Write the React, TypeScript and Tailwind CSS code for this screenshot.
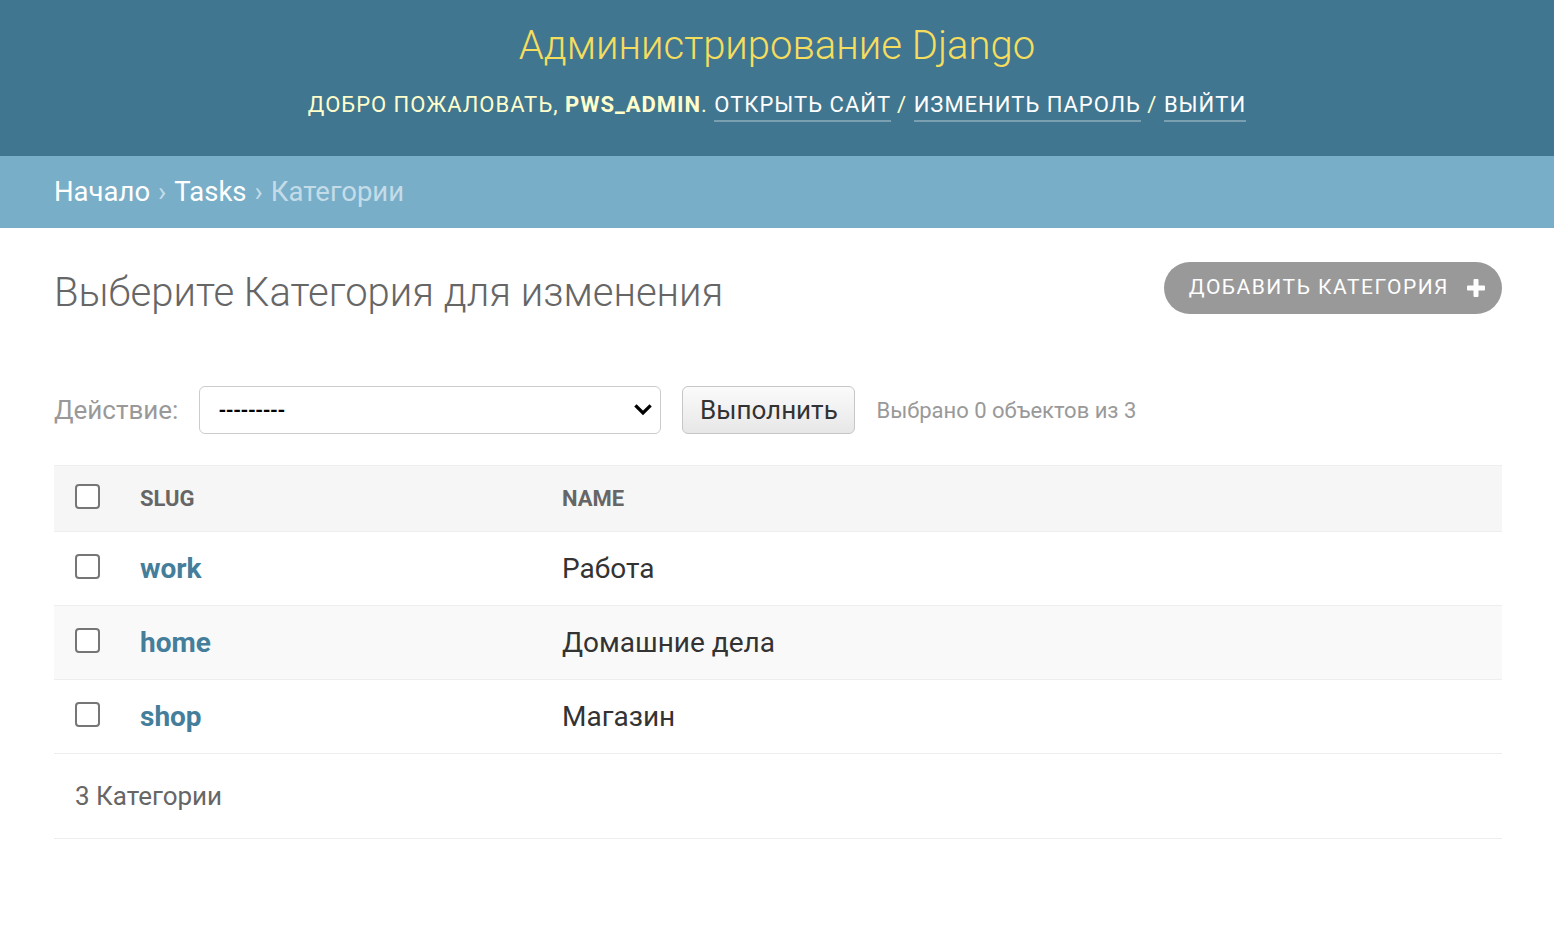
import React from "react";

const rows = [
  { slug: "work", name: "Работа", bg: "bg-white" },
  { slug: "home", name: "Домашние дела", bg: "bg-[#f9f9f9]" },
  { slug: "shop", name: "Магазин", bg: "bg-white" },
];

function Box() {
  return <span className="block w-[25px] h-[25px] rounded-[4px] border-2 border-[#767676] bg-white" />;
}

export default function App() {
  return (
    <div className="min-h-[952px] bg-white" style={{ fontFamily: "Roboto, 'Liberation Sans', sans-serif" }}>
      {/* Header */}
      <header className="h-[156px] bg-[#417690] flex flex-col items-center pt-[22px]">
        <h1 className="text-[40px] leading-[48px] font-light text-[#f5dd5d]">Администрирование Django</h1>
        <div className="mt-[21px] text-[22px] leading-[28px] uppercase tracking-[1px] text-[#ffffcc]">
          Добро пожаловать, <strong className="font-bold">pws_admin</strong>.{" "}
          <a className="text-white border-b-[2px] border-[rgba(255,255,255,0.3)] pb-[3px]">Открыть сайт</a> /{" "}
          <a className="text-white border-b-[2px] border-[rgba(255,255,255,0.3)] pb-[3px]">Изменить пароль</a> /{" "}
          <a className="text-white border-b-[2px] border-[rgba(255,255,255,0.3)] pb-[3px]">Выйти</a>
        </div>
      </header>

      {/* Breadcrumbs */}
      <nav className="h-[72px] bg-[#79aec8] pl-[54px] flex items-center text-[27.5px] text-[#c4dce8]">
        <a className="text-white">Начало</a>
        <span className="mx-[8px]">›</span>
        <a className="text-white">Tasks</a>
        <span className="mx-[8px]">›</span>
        <span>Категории</span>
      </nav>

      {/* Content */}
      <main className="pl-[54px] pr-[52px]">
        <div className="flex justify-between items-start">
          <h1 className="mt-[41px] text-[40px] leading-[48px] font-light text-[#666]">Выберите Категория для изменения</h1>
          <a className="mt-[34px] h-[52px] rounded-full bg-[#999] text-white flex items-center pl-[25px] pr-[16px] text-[21px] uppercase tracking-[1.5px]">
            Добавить Категория
            <svg width="20" height="20" viewBox="0 0 20 20" className="ml-[17px]">
              <rect x="7.5" y="1" width="5" height="18" rx="1" fill="white" />
              <rect x="1" y="7.5" width="18" height="5" rx="1" fill="white" />
            </svg>
          </a>
        </div>

        {/* Action bar */}
        <div className="mt-[69px] flex items-center h-[48px]">
          <label className="text-[26px] text-[#999] mr-[21px]">Действие:</label>
          <div className="relative w-[462px] h-[48px]">
            <select className="appearance-none w-full h-full border border-[#ccc] rounded-[6px] bg-white pl-[18px] text-[20px] font-bold tracking-[-0.5px] text-black outline-none">
              <option>---------</option>
            </select>
            <svg className="absolute right-[9px] top-[17px] pointer-events-none" width="18" height="14" viewBox="0 0 18 14">
              <path d="M2.5 3.5 L9 10 L15.5 3.5" fill="none" stroke="black" strokeWidth="3.2" strokeLinecap="square" />
            </svg>
          </div>
          <button className="ml-[21px] w-[173px] h-[48px] rounded-[6px] border border-[#c6c6c6] bg-gradient-to-b from-[#fbfbfb] to-[#e7e7e7] text-[26px] text-[#333]">
            Выполнить
          </button>
          <span className="ml-[21px] text-[22px] text-[#999]">Выбрано 0 объектов из 3</span>
        </div>

        {/* Table */}
        <div className="mt-[31px] border-t border-[#eee]">
          <div className="grid grid-cols-[86px_422px_1fr] h-[66px] items-center bg-[#f6f6f6] border-b border-[#eee] text-[22px] font-bold text-[#666] uppercase">
            <div className="pl-[21px] -mt-[5px]"><Box /></div>
            <div>Slug</div>
            <div>Name</div>
          </div>
          {rows.map((r) => (
            <div key={r.slug} className={`grid grid-cols-[86px_422px_1fr] h-[74px] items-center border-b border-[#eee] ${r.bg}`}>
              <div className="pl-[21px] -mt-[5px]"><Box /></div>
              <a className="text-[28px] font-bold text-[#447e9b]">{r.slug}</a>
              <div className="text-[28px] text-[#333]">{r.name}</div>
            </div>
          ))}
          <div className="h-[85px] flex items-center pl-[21px] border-b border-[#eee] text-[26px] text-[#666]">
            3 Категории
          </div>
        </div>
      </main>
    </div>
  );
}
